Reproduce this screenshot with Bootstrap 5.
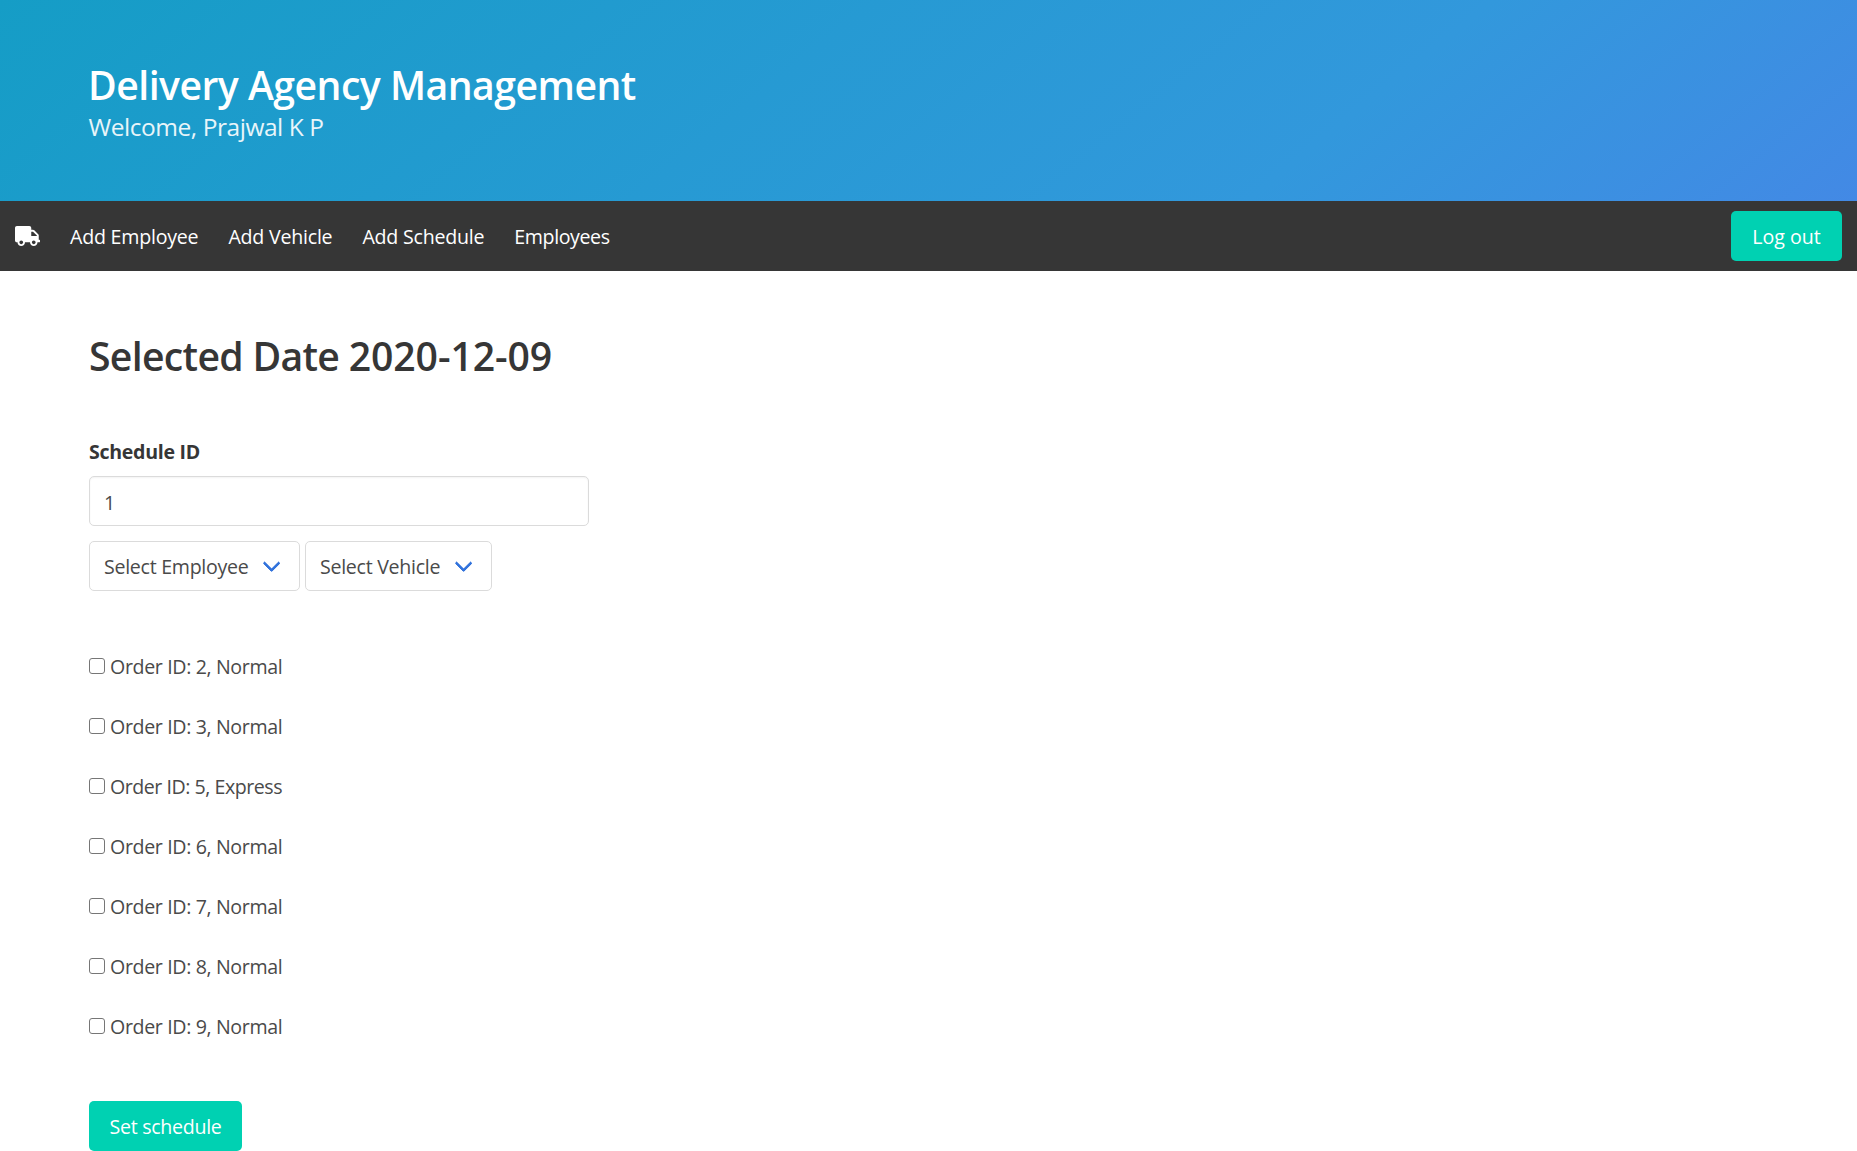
<!DOCTYPE html>
<html lang="en">
<head>
<meta charset="utf-8">
<meta name="viewport" content="width=device-width, initial-scale=1">
<title>Delivery Agency Management</title>
<link href="https://cdn.jsdelivr.net/npm/bootstrap@5.3.0/dist/css/bootstrap.min.css" rel="stylesheet">
<script src="https://cdn.jsdelivr.net/npm/bootstrap@5.3.0/dist/js/bootstrap.bundle.min.js"></script>
<style>
html{overflow:hidden}
body{font-family:"Open Sans","Noto Sans",sans-serif;font-size:19.6px;line-height:30px;color:#4a4a4a;background:#fff}
.agency-hero{height:201px;padding:62px 88.5px 0;background:linear-gradient(141deg,#159dc6 0%,#3298dc 71%,#4389e5 100%);color:#fff}
.agency-title,.date-title{font-size:39.2px;line-height:45px;font-weight:600;letter-spacing:-.53px;margin:0 0 0 -.5px}
.agency-sub{font-size:24.5px;line-height:32px;letter-spacing:-.45px;margin:4px 0 0;opacity:.9}
.agency-nav{height:70px;background:#363636;padding:0 15px}
.agency-nav .nav-link{color:#fff;padding:2px 0 0;margin-right:30px;letter-spacing:-.22px;line-height:30px}
.agency-nav .nav-link.staff-link{letter-spacing:-.4px}
.truck{width:25px;height:20px;margin-right:30px;fill:#fff}
.btn-teal{--bs-btn-color:#fff;--bs-btn-bg:#00d1b2;--bs-btn-border-color:transparent;--bs-btn-hover-color:#fff;--bs-btn-hover-bg:#00c4a7;height:50px;font-size:19.6px;line-height:30px;border:0;border-radius:5px;padding:11px 0 9px}
.btn-logout{width:111px}
.btn-set{width:153px;letter-spacing:-.29px;margin-top:60px}
.page-body{padding:62px 89px 0}
.date-title{color:#363636;letter-spacing:-.7px;margin-left:0}
.date-title span{letter-spacing:-.1px}
.id-label{color:#363636;font-weight:700;letter-spacing:-.3px;margin:59px 0 9px;line-height:30px}
.id-input.form-control,.pick select{height:50px;border:1px solid #dbdbdb;border-radius:5px;color:#4a4a4a;background:#fff;font-size:19.6px;line-height:30px;padding:10px 14px 8px}
.id-input.form-control{width:500px;box-shadow:inset 0 1px 2px rgba(10,10,10,.05)}
.picks{gap:5px;margin-top:15px}
.pick{position:relative}
.pick select{appearance:none;width:100%;display:block;letter-spacing:-.28px;outline:0}
.pick::after{content:"";position:absolute;width:12.5px;height:12.5px;right:22.5px;top:50%;margin-top:-8.75px;border:3px solid #3273dc;border-top:0;border-right:0;border-radius:2px;transform:rotate(-45deg);pointer-events:none}
.pick-employee{width:211px}
.pick-vehicle{width:187px}
.orders{gap:30px;margin-top:60px}
.order{letter-spacing:-.36px;gap:5px;line-height:30px}
.order span{padding-top:1px;line-height:29px}
.order-express{letter-spacing:-.47px}
.order input{appearance:none;width:16px;height:16px;margin:0;border:1px solid #767676;border-radius:3px;background:#fff}
.order input:checked{background:#3273dc}
</style>
</head>
<body>
<header class="agency-hero">
  <h1 class="agency-title">Delivery Agency Management</h1>
  <p class="agency-sub">Welcome, Prajwal K P</p>
</header>
<nav class="agency-nav d-flex align-items-center">
  <a href="#" class="d-flex" aria-label="Home"><svg class="truck" viewBox="0 0 640 512"><path d="M624 352h-16V243.900c0-12.700-5.100-24.900-14.100-33.900L494 110.100c-9-9-21.200-14.100-33.900-14.100H416V48c0-26.500-21.500-48-48-48H48C21.500 0 0 21.500 0 48v320c0 26.500 21.500 48 48 48h16c0 53 43 96 96 96s96-43 96-96h128c0 53 43 96 96 96s96-43 96-96h48c8.800 0 16-7.200 16-16v-32c0-8.800-7.200-16-16-16zM160 464c-26.500 0-48-21.500-48-48s21.500-48 48-48 48 21.500 48 48-21.500 48-48 48zm320 0c-26.500 0-48-21.500-48-48s21.500-48 48-48 48 21.500 48 48-21.500 48-48 48zm80-208H416V144h44.100l99.900 99.900V256z"/></svg></a>
  <a href="#" class="nav-link">Add Employee</a>
  <a href="#" class="nav-link">Add Vehicle</a>
  <a href="#" class="nav-link">Add Schedule</a>
  <a href="#" class="nav-link staff-link">Employees</a>
  <button type="button" class="btn btn-teal btn-logout ms-auto">Log out</button>
</nav>
<main class="page-body">
  <h2 class="date-title">Selected Date <span>2020-12-09</span></h2>
  <form>
    <label class="id-label d-block" for="schedule-id">Schedule ID</label>
    <input class="form-control id-input" id="schedule-id" type="text" value="1">
    <div class="picks d-flex">
      <div class="pick pick-employee"><select aria-label="Employee"><option>Select Employee</option></select></div>
      <div class="pick pick-vehicle"><select aria-label="Vehicle"><option>Select Vehicle</option></select></div>
    </div>
    <div class="orders d-flex flex-column align-items-start">
      <label class="order d-flex align-items-center"><input type="checkbox"><span>Order ID: 2, Normal</span></label>
      <label class="order d-flex align-items-center"><input type="checkbox"><span>Order ID: 3, Normal</span></label>
      <label class="order order-express d-flex align-items-center"><input type="checkbox"><span>Order ID: 5, Express</span></label>
      <label class="order d-flex align-items-center"><input type="checkbox"><span>Order ID: 6, Normal</span></label>
      <label class="order d-flex align-items-center"><input type="checkbox"><span>Order ID: 7, Normal</span></label>
      <label class="order d-flex align-items-center"><input type="checkbox"><span>Order ID: 8, Normal</span></label>
      <label class="order d-flex align-items-center"><input type="checkbox"><span>Order ID: 9, Normal</span></label>
    </div>
    <button type="button" class="btn btn-teal btn-set">Set schedule</button>
  </form>
</main>
</body>
</html>
